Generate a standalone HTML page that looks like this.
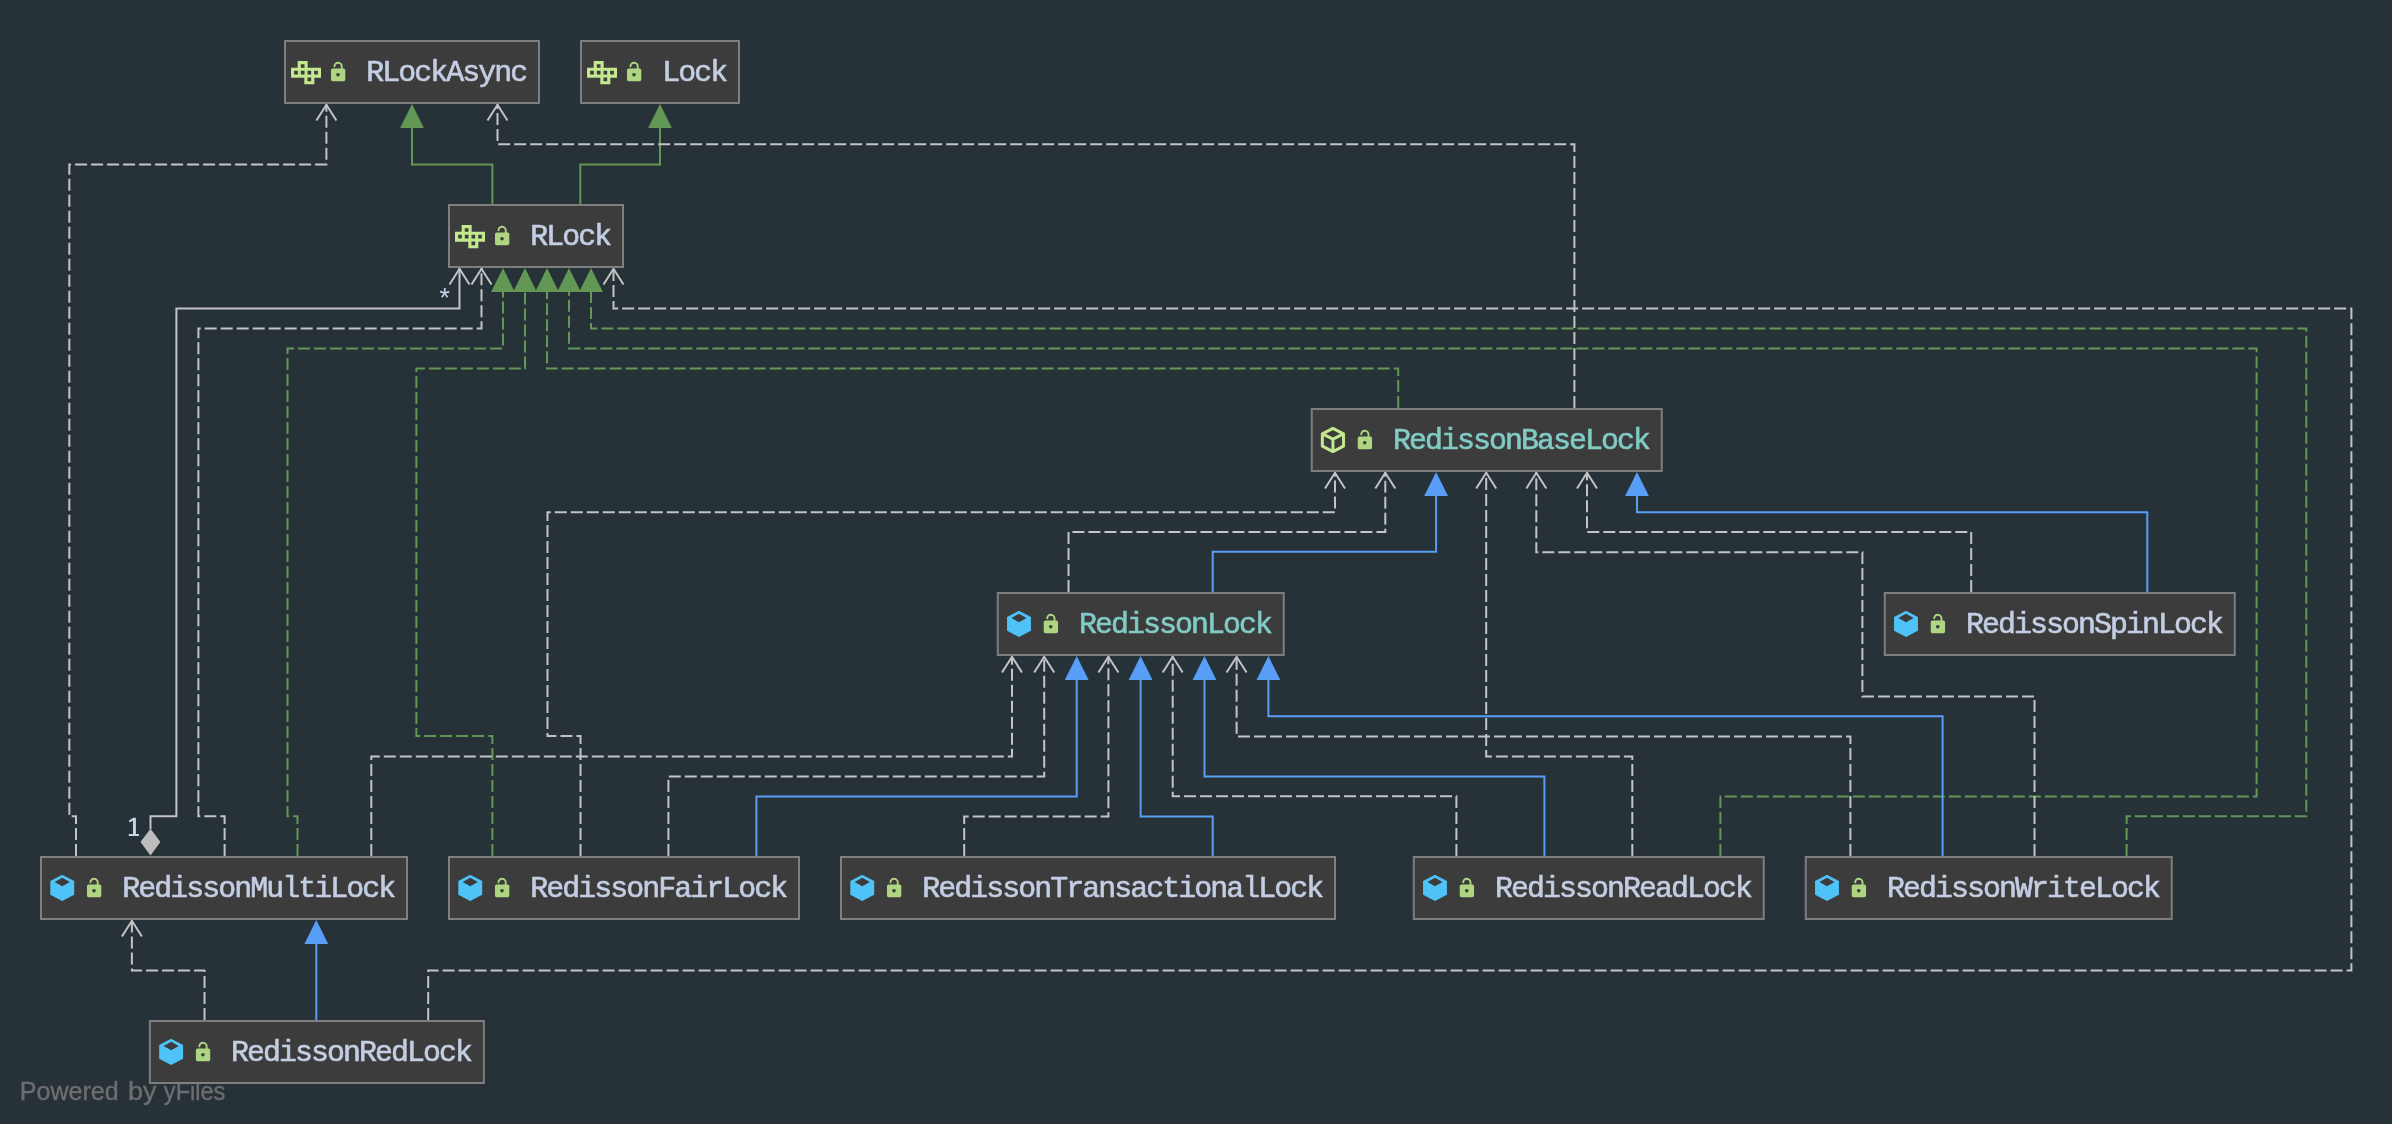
<!DOCTYPE html>
<html><head><meta charset="utf-8"><title>RLock diagram</title>
<style>
html,body{margin:0;padding:0;background:#263238;width:2392px;height:1124px;overflow:hidden}
svg{display:block}
.nm{font-family:"Liberation Mono",monospace;font-size:26.667px}
svg{will-change:transform}
.sans{font-family:"Liberation Sans",sans-serif}
.serif{font-family:"Liberation Serif",serif}
</style></head><body>
<svg width="2392" height="1124" viewBox="0 0 2392 1124">
<rect x="0" y="0" width="2392" height="1124" fill="#263238"/>
<path d="M76 856 L76 816.3 L69.35 816.3 L69.35 164.4 L326.4 164.4 L326.4 104" fill="none" stroke="#c4c4c4" stroke-width="2" stroke-dasharray="12 4"/><path d="M316.4 120.5 L326.4 104.8 L336.4 120.5" fill="none" stroke="#c4c4c4" stroke-width="2" stroke-linejoin="miter"/>
<path d="M492.4 204 L492.4 164.4 L412 164.4 L412 127" fill="none" stroke="#629755" stroke-width="2"/><path d="M412 104.1 L423.9 128 L400.1 128 Z" fill="#629755"/>
<path d="M580.3 204 L580.3 164.4 L660 164.4 L660 127" fill="none" stroke="#629755" stroke-width="2"/><path d="M660 104.1 L671.9 128 L648.1 128 Z" fill="#629755"/>
<path d="M1574.4 408 L1574.4 144.2 L497.5 144.2 L497.5 104" fill="none" stroke="#c4c4c4" stroke-width="2" stroke-dasharray="12 4"/><path d="M487.5 120.5 L497.5 104.8 L507.5 120.5" fill="none" stroke="#c4c4c4" stroke-width="2" stroke-linejoin="miter"/>
<path d="M150.5 829 L150.5 816.3 L176.4 816.3 L176.4 308.4 L459.5 308.4 L459.5 268" fill="none" stroke="#c4c4c4" stroke-width="2"/><path d="M449.5 284.5 L459.5 268.8 L469.5 284.5" fill="none" stroke="#c4c4c4" stroke-width="2" stroke-linejoin="miter"/>
<path d="M224.6 856 L224.6 816.3 L198.4 816.3 L198.4 328.5 L481.5 328.5 L481.5 268" fill="none" stroke="#c4c4c4" stroke-width="2" stroke-dasharray="12 4"/><path d="M471.5 284.5 L481.5 268.8 L491.5 284.5" fill="none" stroke="#c4c4c4" stroke-width="2" stroke-linejoin="miter"/>
<path d="M297.5 856 L297.5 816.3 L287.5 816.3 L287.5 348.5 L503 348.5 L503 291" fill="none" stroke="#629755" stroke-width="2" stroke-dasharray="12 4"/><path d="M503 268.1 L514.9 292 L491.1 292 Z" fill="#629755"/>
<path d="M492.4 856 L492.4 736.1 L416.4 736.1 L416.4 368.5 L525 368.5 L525 291" fill="none" stroke="#629755" stroke-width="2" stroke-dasharray="12 4"/><path d="M525 268.1 L536.9 292 L513.1 292 Z" fill="#629755"/>
<path d="M1398.2 408 L1398.2 368.5 L547 368.5 L547 291" fill="none" stroke="#629755" stroke-width="2" stroke-dasharray="12 4"/><path d="M547 268.1 L558.9 292 L535.1 292 Z" fill="#629755"/>
<path d="M1720.4 856 L1720.4 796.4 L2256.6 796.4 L2256.6 348.5 L569 348.5 L569 291" fill="none" stroke="#629755" stroke-width="2" stroke-dasharray="12 4"/><path d="M569 268.1 L580.9 292 L557.1 292 Z" fill="#629755"/>
<path d="M2126.6 856 L2126.6 816.3 L2306.3 816.3 L2306.3 328.5 L591 328.5 L591 291" fill="none" stroke="#629755" stroke-width="2" stroke-dasharray="12 4"/><path d="M591 268.1 L602.9 292 L579.1 292 Z" fill="#629755"/>
<path d="M428.2 1020 L428.2 970.4 L2351.4 970.4 L2351.4 308.4 L613.5 308.4 L613.5 268" fill="none" stroke="#c4c4c4" stroke-width="2" stroke-dasharray="12 4"/><path d="M603.5 284.5 L613.5 268.8 L623.5 284.5" fill="none" stroke="#c4c4c4" stroke-width="2" stroke-linejoin="miter"/>
<path d="M580.5 856 L580.5 736.1 L547.5 736.1 L547.5 512.3 L1335 512.3 L1335 472" fill="none" stroke="#c4c4c4" stroke-width="2" stroke-dasharray="12 4"/><path d="M1325 488.5 L1335 472.8 L1345 488.5" fill="none" stroke="#c4c4c4" stroke-width="2" stroke-linejoin="miter"/>
<path d="M1068.5 592 L1068.5 531.9 L1385.3 531.9 L1385.3 472" fill="none" stroke="#c4c4c4" stroke-width="2" stroke-dasharray="12 4"/><path d="M1375.3 488.5 L1385.3 472.8 L1395.3 488.5" fill="none" stroke="#c4c4c4" stroke-width="2" stroke-linejoin="miter"/>
<path d="M1212.7 592 L1212.7 551.8 L1436.1 551.8 L1436.1 495" fill="none" stroke="#589df6" stroke-width="2"/><path d="M1436.1 472.1 L1448 496 L1424.2 496 Z" fill="#589df6"/>
<path d="M1632.3 856 L1632.3 756.4 L1486.2 756.4 L1486.2 472" fill="none" stroke="#c4c4c4" stroke-width="2" stroke-dasharray="12 4"/><path d="M1476.2 488.5 L1486.2 472.8 L1496.2 488.5" fill="none" stroke="#c4c4c4" stroke-width="2" stroke-linejoin="miter"/>
<path d="M2034.5 856 L2034.5 696.5 L1862.4 696.5 L1862.4 552.2 L1536.3 552.2 L1536.3 472" fill="none" stroke="#c4c4c4" stroke-width="2" stroke-dasharray="12 4"/><path d="M1526.3 488.5 L1536.3 472.8 L1546.3 488.5" fill="none" stroke="#c4c4c4" stroke-width="2" stroke-linejoin="miter"/>
<path d="M1971.2 592 L1971.2 531.9 L1587 531.9 L1587 472" fill="none" stroke="#c4c4c4" stroke-width="2" stroke-dasharray="12 4"/><path d="M1577 488.5 L1587 472.8 L1597 488.5" fill="none" stroke="#c4c4c4" stroke-width="2" stroke-linejoin="miter"/>
<path d="M2147.3 592 L2147.3 512.3 L1637 512.3 L1637 495" fill="none" stroke="#589df6" stroke-width="2"/><path d="M1637 472.1 L1648.9 496 L1625.1 496 Z" fill="#589df6"/>
<path d="M371.3 856 L371.3 756.5 L1012 756.5 L1012 656" fill="none" stroke="#c4c4c4" stroke-width="2" stroke-dasharray="12 4"/><path d="M1002 672.5 L1012 656.8 L1022 672.5" fill="none" stroke="#c4c4c4" stroke-width="2" stroke-linejoin="miter"/>
<path d="M668.4 856 L668.4 776.4 L1044.2 776.4 L1044.2 656" fill="none" stroke="#c4c4c4" stroke-width="2" stroke-dasharray="12 4"/><path d="M1034.2 672.5 L1044.2 656.8 L1054.2 672.5" fill="none" stroke="#c4c4c4" stroke-width="2" stroke-linejoin="miter"/>
<path d="M756.4 856 L756.4 796.5 L1076.7 796.5 L1076.7 679" fill="none" stroke="#589df6" stroke-width="2"/><path d="M1076.7 656.1 L1088.6 680 L1064.8 680 Z" fill="#589df6"/>
<path d="M964.2 856 L964.2 816.5 L1108.4 816.5 L1108.4 656" fill="none" stroke="#c4c4c4" stroke-width="2" stroke-dasharray="12 4"/><path d="M1098.4 672.5 L1108.4 656.8 L1118.4 672.5" fill="none" stroke="#c4c4c4" stroke-width="2" stroke-linejoin="miter"/>
<path d="M1212.7 856 L1212.7 816.5 L1140.6 816.5 L1140.6 679" fill="none" stroke="#589df6" stroke-width="2"/><path d="M1140.6 656.1 L1152.5 680 L1128.7 680 Z" fill="#589df6"/>
<path d="M1456.4 856 L1456.4 796.3 L1172.7 796.3 L1172.7 656" fill="none" stroke="#c4c4c4" stroke-width="2" stroke-dasharray="12 4"/><path d="M1162.7 672.5 L1172.7 656.8 L1182.7 672.5" fill="none" stroke="#c4c4c4" stroke-width="2" stroke-linejoin="miter"/>
<path d="M1544.4 856 L1544.4 776.5 L1204.5 776.5 L1204.5 679" fill="none" stroke="#589df6" stroke-width="2"/><path d="M1204.5 656.1 L1216.4 680 L1192.6 680 Z" fill="#589df6"/>
<path d="M1850.4 856 L1850.4 736.4 L1236.6 736.4 L1236.6 656" fill="none" stroke="#c4c4c4" stroke-width="2" stroke-dasharray="12 4"/><path d="M1226.6 672.5 L1236.6 656.8 L1246.6 672.5" fill="none" stroke="#c4c4c4" stroke-width="2" stroke-linejoin="miter"/>
<path d="M1942.6 856 L1942.6 716.2 L1268.4 716.2 L1268.4 679" fill="none" stroke="#589df6" stroke-width="2"/><path d="M1268.4 656.1 L1280.3 680 L1256.5 680 Z" fill="#589df6"/>
<path d="M204.5 1020 L204.5 970.4 L131.9 970.4 L131.9 920" fill="none" stroke="#c4c4c4" stroke-width="2" stroke-dasharray="12 4"/><path d="M121.9 936.5 L131.9 920.8 L141.9 936.5" fill="none" stroke="#c4c4c4" stroke-width="2" stroke-linejoin="miter"/>
<path d="M316.3 1020 L316.3 943" fill="none" stroke="#589df6" stroke-width="2"/><path d="M316.3 920.1 L328.2 944 L304.4 944 Z" fill="#589df6"/>
<g fill="#6e6e6e" stroke="#6e6e6e" stroke-width="0.35" font-size="26"><text class="sans" transform="translate(19.74 1100.1) scale(0.9645 1)">Powered</text><text class="sans" transform="translate(128.07 1100.1) scale(1.034 1)">by</text><text class="sans" transform="translate(163.84 1100.1) scale(0.907 1)">yFiles</text></g>
<rect x="285" y="41" width="254" height="62" fill="#3c3c3c" stroke="#7e7e7e" stroke-width="2"/><path d="M297.67 61 L307.67 61 L307.67 67.67 L321 67.67 L321 77.66 L314.33 77.66 L314.33 84.33 L304.33 84.33 L304.33 77.66 L291 77.66 L291 67.67 L297.67 67.67 Z M300.82 64.15 h3.7 v3.7 h-3.7 Z M294.15 70.82 h3.7 v3.7 h-3.7 Z M300.82 70.82 h3.7 v3.7 h-3.7 Z M307.48 70.82 h3.7 v3.7 h-3.7 Z M314.15 70.82 h3.7 v3.7 h-3.7 Z M307.48 77.48 h3.7 v3.7 h-3.7 Z" fill="#c3e88d" fill-rule="evenodd"/><rect x="331" y="68.6" width="14.3" height="12.6" rx="1.6" fill="#aed581"/><path d="M334.45 66.3 A3.65 3.65 0 0 1 341.75 66.5 V69.9" fill="none" stroke="#aed581" stroke-width="1.9" stroke-linecap="round"/><circle cx="338" cy="74.7" r="1.8" fill="#3c3c3c"/><text class="nm" transform="translate(366.2 81.2) scale(1.12 1.085)" x="0" y="0" letter-spacing="-1.71" fill="#c3cee3" stroke="#c3cee3" stroke-width="0.55">RLockAsync</text>
<rect x="581" y="41" width="158" height="62" fill="#3c3c3c" stroke="#7e7e7e" stroke-width="2"/><path d="M593.67 61 L603.66 61 L603.66 67.67 L617 67.67 L617 77.66 L610.33 77.66 L610.33 84.33 L600.33 84.33 L600.33 77.66 L587 77.66 L587 67.67 L593.67 67.67 Z M596.82 64.15 h3.7 v3.7 h-3.7 Z M590.15 70.82 h3.7 v3.7 h-3.7 Z M596.82 70.82 h3.7 v3.7 h-3.7 Z M603.48 70.82 h3.7 v3.7 h-3.7 Z M610.15 70.82 h3.7 v3.7 h-3.7 Z M603.48 77.48 h3.7 v3.7 h-3.7 Z" fill="#c3e88d" fill-rule="evenodd"/><rect x="627" y="68.6" width="14.3" height="12.6" rx="1.6" fill="#aed581"/><path d="M630.45 66.3 A3.65 3.65 0 0 1 637.75 66.5 V69.9" fill="none" stroke="#aed581" stroke-width="1.9" stroke-linecap="round"/><circle cx="634" cy="74.7" r="1.8" fill="#3c3c3c"/><text class="nm" transform="translate(662.2 81.2) scale(1.12 1.085)" x="0" y="0" letter-spacing="-1.71" fill="#c3cee3" stroke="#c3cee3" stroke-width="0.55">Lock</text>
<rect x="449" y="205" width="174" height="62" fill="#3c3c3c" stroke="#7e7e7e" stroke-width="2"/><path d="M461.67 225 L471.67 225 L471.67 231.67 L485 231.67 L485 241.66 L478.33 241.66 L478.33 248.33 L468.33 248.33 L468.33 241.66 L455 241.66 L455 231.67 L461.67 231.67 Z M464.82 228.15 h3.7 v3.7 h-3.7 Z M458.15 234.82 h3.7 v3.7 h-3.7 Z M464.82 234.82 h3.7 v3.7 h-3.7 Z M471.48 234.82 h3.7 v3.7 h-3.7 Z M478.15 234.82 h3.7 v3.7 h-3.7 Z M471.48 241.48 h3.7 v3.7 h-3.7 Z" fill="#c3e88d" fill-rule="evenodd"/><rect x="495" y="232.6" width="14.3" height="12.6" rx="1.6" fill="#aed581"/><path d="M498.45 230.3 A3.65 3.65 0 0 1 505.75 230.5 V233.9" fill="none" stroke="#aed581" stroke-width="1.9" stroke-linecap="round"/><circle cx="502" cy="238.7" r="1.8" fill="#3c3c3c"/><text class="nm" transform="translate(530.2 245.2) scale(1.12 1.085)" x="0" y="0" letter-spacing="-1.71" fill="#c3cee3" stroke="#c3cee3" stroke-width="0.55">RLock</text>
<rect x="1311.75" y="409" width="350" height="62" fill="#3c3c3c" stroke="#7e7e7e" stroke-width="2"/><path d="M1332.95 428.3 L1343.55 433.8 L1343.55 446.2 L1332.95 451.6 L1322.35 446.2 L1322.35 433.8 Z M1322.35 433.8 L1332.95 439.2 L1343.55 433.8 M1332.95 439.2 V451.6" fill="none" stroke="#c3e88d" stroke-width="3" stroke-linejoin="round"/><rect x="1357.75" y="436.6" width="14.3" height="12.6" rx="1.6" fill="#aed581"/><path d="M1361.2 434.3 A3.65 3.65 0 0 1 1368.5 434.5 V437.9" fill="none" stroke="#aed581" stroke-width="1.9" stroke-linecap="round"/><circle cx="1364.75" cy="442.7" r="1.8" fill="#3c3c3c"/><text class="nm" transform="translate(1392.95 449.2) scale(1.12 1.085)" x="0" y="0" letter-spacing="-1.71" fill="#80cbc4" stroke="#80cbc4" stroke-width="0.55">RedissonBaseLock</text>
<rect x="997.75" y="593" width="286" height="62" fill="#3c3c3c" stroke="#7e7e7e" stroke-width="2"/><path d="M1019 610.7 L1030.95 617.1 L1030.95 630.7 L1019 637.1 L1007.05 630.7 L1007.05 617.1 Z M1019 613.8 L1026.6 618 L1019 622.2 L1011.4 618 Z" fill="#4fc3f7" fill-rule="evenodd"/><rect x="1043.75" y="620.6" width="14.3" height="12.6" rx="1.6" fill="#aed581"/><path d="M1047.2 618.3 A3.65 3.65 0 0 1 1054.5 618.5 V621.9" fill="none" stroke="#aed581" stroke-width="1.9" stroke-linecap="round"/><circle cx="1050.75" cy="626.7" r="1.8" fill="#3c3c3c"/><text class="nm" transform="translate(1078.95 633.2) scale(1.12 1.085)" x="0" y="0" letter-spacing="-1.71" fill="#80cbc4" stroke="#80cbc4" stroke-width="0.55">RedissonLock</text>
<rect x="1884.75" y="593" width="350" height="62" fill="#3c3c3c" stroke="#7e7e7e" stroke-width="2"/><path d="M1906 610.7 L1917.95 617.1 L1917.95 630.7 L1906 637.1 L1894.05 630.7 L1894.05 617.1 Z M1906 613.8 L1913.6 618 L1906 622.2 L1898.4 618 Z" fill="#4fc3f7" fill-rule="evenodd"/><rect x="1930.75" y="620.6" width="14.3" height="12.6" rx="1.6" fill="#aed581"/><path d="M1934.2 618.3 A3.65 3.65 0 0 1 1941.5 618.5 V621.9" fill="none" stroke="#aed581" stroke-width="1.9" stroke-linecap="round"/><circle cx="1937.75" cy="626.7" r="1.8" fill="#3c3c3c"/><text class="nm" transform="translate(1965.95 633.2) scale(1.12 1.085)" x="0" y="0" letter-spacing="-1.71" fill="#c3cee3" stroke="#c3cee3" stroke-width="0.55">RedissonSpinLock</text>
<rect x="41" y="857" width="366" height="62" fill="#3c3c3c" stroke="#7e7e7e" stroke-width="2"/><path d="M62.25 874.7 L74.2 881.1 L74.2 894.7 L62.25 901.1 L50.3 894.7 L50.3 881.1 Z M62.25 877.8 L69.85 882 L62.25 886.2 L54.65 882 Z" fill="#4fc3f7" fill-rule="evenodd"/><rect x="87" y="884.6" width="14.3" height="12.6" rx="1.6" fill="#aed581"/><path d="M90.45 882.3 A3.65 3.65 0 0 1 97.75 882.5 V885.9" fill="none" stroke="#aed581" stroke-width="1.9" stroke-linecap="round"/><circle cx="94" cy="890.7" r="1.8" fill="#3c3c3c"/><text class="nm" transform="translate(122.2 897.2) scale(1.12 1.085)" x="0" y="0" letter-spacing="-1.71" fill="#c3cee3" stroke="#c3cee3" stroke-width="0.55">RedissonMultiLock</text>
<rect x="449" y="857" width="350" height="62" fill="#3c3c3c" stroke="#7e7e7e" stroke-width="2"/><path d="M470.25 874.7 L482.2 881.1 L482.2 894.7 L470.25 901.1 L458.3 894.7 L458.3 881.1 Z M470.25 877.8 L477.85 882 L470.25 886.2 L462.65 882 Z" fill="#4fc3f7" fill-rule="evenodd"/><rect x="495" y="884.6" width="14.3" height="12.6" rx="1.6" fill="#aed581"/><path d="M498.45 882.3 A3.65 3.65 0 0 1 505.75 882.5 V885.9" fill="none" stroke="#aed581" stroke-width="1.9" stroke-linecap="round"/><circle cx="502" cy="890.7" r="1.8" fill="#3c3c3c"/><text class="nm" transform="translate(530.2 897.2) scale(1.12 1.085)" x="0" y="0" letter-spacing="-1.71" fill="#c3cee3" stroke="#c3cee3" stroke-width="0.55">RedissonFairLock</text>
<rect x="841" y="857" width="494" height="62" fill="#3c3c3c" stroke="#7e7e7e" stroke-width="2"/><path d="M862.25 874.7 L874.2 881.1 L874.2 894.7 L862.25 901.1 L850.3 894.7 L850.3 881.1 Z M862.25 877.8 L869.85 882 L862.25 886.2 L854.65 882 Z" fill="#4fc3f7" fill-rule="evenodd"/><rect x="887" y="884.6" width="14.3" height="12.6" rx="1.6" fill="#aed581"/><path d="M890.45 882.3 A3.65 3.65 0 0 1 897.75 882.5 V885.9" fill="none" stroke="#aed581" stroke-width="1.9" stroke-linecap="round"/><circle cx="894" cy="890.7" r="1.8" fill="#3c3c3c"/><text class="nm" transform="translate(922.2 897.2) scale(1.12 1.085)" x="0" y="0" letter-spacing="-1.71" fill="#c3cee3" stroke="#c3cee3" stroke-width="0.55">RedissonTransactionalLock</text>
<rect x="1413.75" y="857" width="350" height="62" fill="#3c3c3c" stroke="#7e7e7e" stroke-width="2"/><path d="M1435 874.7 L1446.95 881.1 L1446.95 894.7 L1435 901.1 L1423.05 894.7 L1423.05 881.1 Z M1435 877.8 L1442.6 882 L1435 886.2 L1427.4 882 Z" fill="#4fc3f7" fill-rule="evenodd"/><rect x="1459.75" y="884.6" width="14.3" height="12.6" rx="1.6" fill="#aed581"/><path d="M1463.2 882.3 A3.65 3.65 0 0 1 1470.5 882.5 V885.9" fill="none" stroke="#aed581" stroke-width="1.9" stroke-linecap="round"/><circle cx="1466.75" cy="890.7" r="1.8" fill="#3c3c3c"/><text class="nm" transform="translate(1494.95 897.2) scale(1.12 1.085)" x="0" y="0" letter-spacing="-1.71" fill="#c3cee3" stroke="#c3cee3" stroke-width="0.55">RedissonReadLock</text>
<rect x="1805.75" y="857" width="366" height="62" fill="#3c3c3c" stroke="#7e7e7e" stroke-width="2"/><path d="M1827 874.7 L1838.95 881.1 L1838.95 894.7 L1827 901.1 L1815.05 894.7 L1815.05 881.1 Z M1827 877.8 L1834.6 882 L1827 886.2 L1819.4 882 Z" fill="#4fc3f7" fill-rule="evenodd"/><rect x="1851.75" y="884.6" width="14.3" height="12.6" rx="1.6" fill="#aed581"/><path d="M1855.2 882.3 A3.65 3.65 0 0 1 1862.5 882.5 V885.9" fill="none" stroke="#aed581" stroke-width="1.9" stroke-linecap="round"/><circle cx="1858.75" cy="890.7" r="1.8" fill="#3c3c3c"/><text class="nm" transform="translate(1886.95 897.2) scale(1.12 1.085)" x="0" y="0" letter-spacing="-1.71" fill="#c3cee3" stroke="#c3cee3" stroke-width="0.55">RedissonWriteLock</text>
<rect x="149.9" y="1021" width="334" height="62" fill="#3c3c3c" stroke="#7e7e7e" stroke-width="2"/><path d="M171.15 1038.7 L183.1 1045.1 L183.1 1058.7 L171.15 1065.1 L159.2 1058.7 L159.2 1045.1 Z M171.15 1041.8 L178.75 1046 L171.15 1050.2 L163.55 1046 Z" fill="#4fc3f7" fill-rule="evenodd"/><rect x="195.9" y="1048.6" width="14.3" height="12.6" rx="1.6" fill="#aed581"/><path d="M199.35 1046.3 A3.65 3.65 0 0 1 206.65 1046.5 V1049.9" fill="none" stroke="#aed581" stroke-width="1.9" stroke-linecap="round"/><circle cx="202.9" cy="1054.7" r="1.8" fill="#3c3c3c"/><text class="nm" transform="translate(231.1 1061.2) scale(1.12 1.085)" x="0" y="0" letter-spacing="-1.71" fill="#c3cee3" stroke="#c3cee3" stroke-width="0.55">RedissonRedLock</text>
<path d="M150.5 828.7 L160.4 842 L150.5 855.4 L140.5 842 Z" fill="#bdbdbd"/>
<path d="M133 817.8 h2.9 v18.2 h-2.9 Z M128.8 834 h10.2 v2 h-10.2 Z" fill="#c8d3ea"/><path d="M134 818.6 L129.3 821.6" stroke="#d0dcf5" stroke-width="2.1" fill="none"/><text class="sans" x="439.5" y="306.5" font-size="26.9" fill="#c8d3ea">*</text>
</svg>
</body></html>
